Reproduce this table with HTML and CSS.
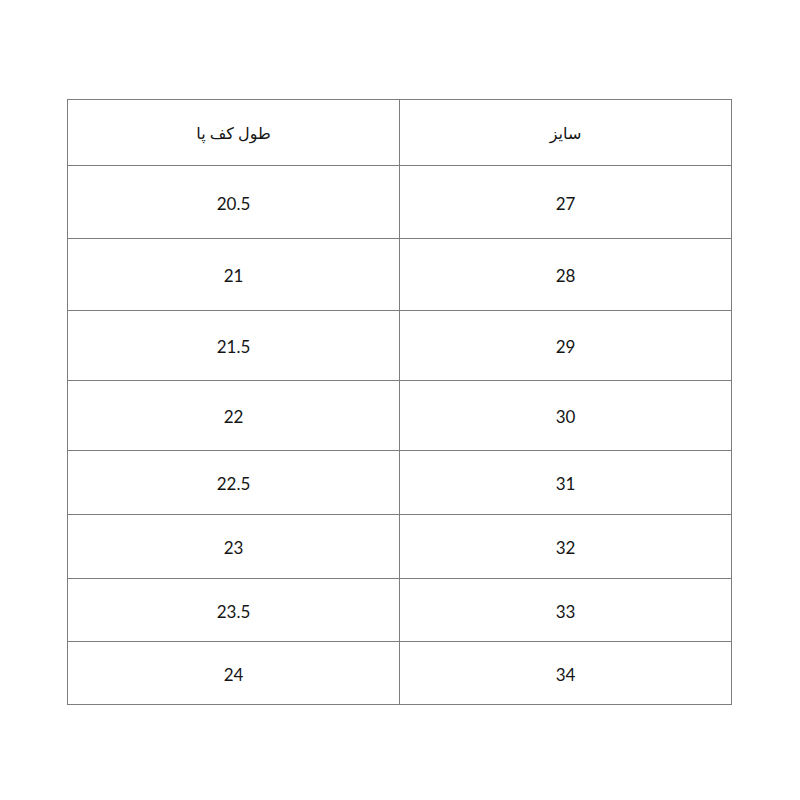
FILE: index.html
```html
<!DOCTYPE html>
<html lang="fa">
<head>
<meta charset="utf-8">
<title>جدول سایز</title>
<link rel="stylesheet" href="styles.css">
</head>
<body>
<div class="size-table" dir="rtl">
  <div class="cell head">سایز</div><div class="cell head">طول کف پا</div>
  <div class="cell">27</div><div class="cell">20.5</div>
  <div class="cell">28</div><div class="cell">21</div>
  <div class="cell">29</div><div class="cell">21.5</div>
  <div class="cell">30</div><div class="cell">22</div>
  <div class="cell">31</div><div class="cell">22.5</div>
  <div class="cell">32</div><div class="cell">23</div>
  <div class="cell">33</div><div class="cell">23.5</div>
  <div class="cell">34</div><div class="cell">24</div>
</div>
</body>
</html>
```
FILE: styles.css
```css
html, body {
  margin: 0;
  padding: 0;
  background: #ffffff;
}
body {
  padding: 99px 0 0 67px;
  font-family: Lato, "DejaVu Sans", sans-serif;
  font-size: 17px;
  color: #151515;
}
.size-table {
  width: 665px;
  box-sizing: border-box;
  display: grid;
  grid-template-columns: 331px 331px;
  grid-template-rows: 65px 72px 71px 69px 69px 63px 63px 62px 62px;
  gap: 1px;
  padding: 1px;
  background: #7d7d7d;
}
.cell {
  background: #ffffff;
  display: flex;
  align-items: center;
  justify-content: center;
  padding-top: 2px;
  box-sizing: border-box;
}
.head {
  padding-top: 0;
  font-size: 16px;
}
```
